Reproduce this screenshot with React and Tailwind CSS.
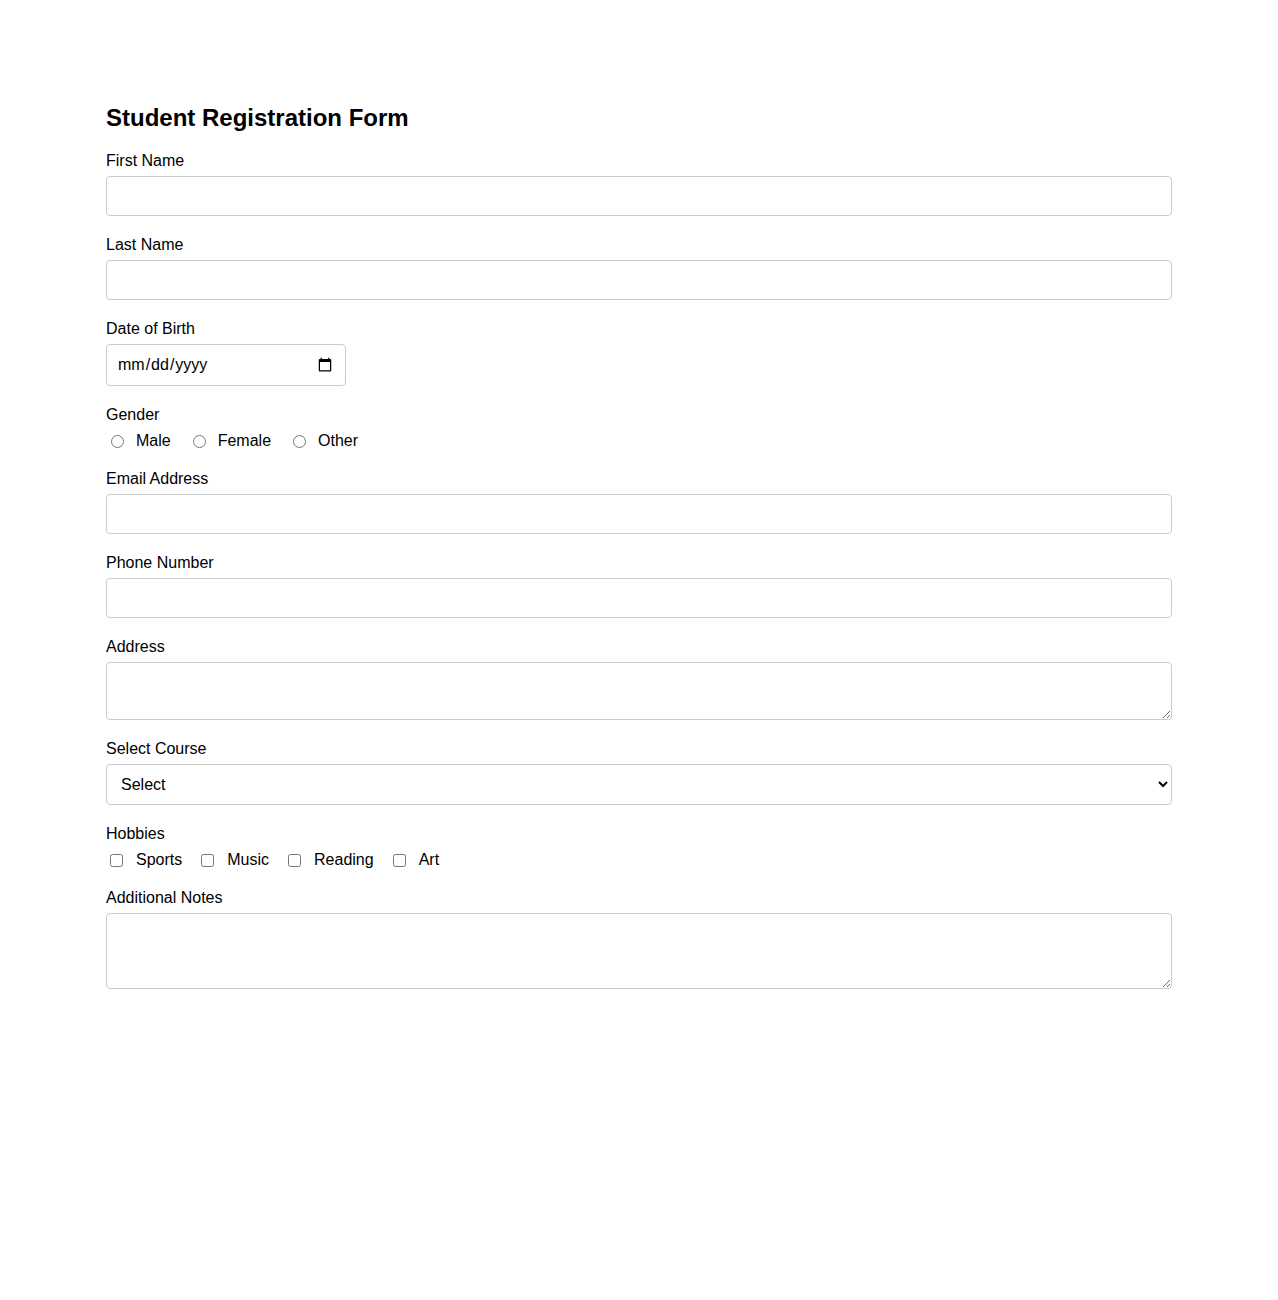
import { useState } from "react";

const inputClass =
  "block w-full px-[10px] py-[10px] text-base leading-[normal] border border-[#ccc] rounded-[4px] bg-white text-black";

function Field({ label, children }) {
  return (
    <div className="mb-5">
      <label className="block mb-[6px] leading-[normal]">{label}</label>
      {children}
    </div>
  );
}

export default function App() {
  const [form, setForm] = useState({
    firstName: "",
    lastName: "",
    dob: "",
    gender: "",
    email: "",
    phone: "",
    address: "",
    course: "",
    hobbies: [],
    notes: "",
  });

  const update = (key) => (e) => setForm({ ...form, [key]: e.target.value });

  const toggleHobby = (h) => {
    const list = form.hobbies.includes(h)
      ? form.hobbies.filter((x) => x !== h)
      : [...form.hobbies, h];
    setForm({ ...form, hobbies: list });
  };

  return (
    <div
      className="min-h-screen bg-white text-black px-[106px] pt-[104px]"
      style={{ fontFamily: '"Liberation Sans", Arial, sans-serif' }}
    >
      {/* Header */}
      <h2 className="text-2xl font-bold leading-[normal] mb-5">
        Student Registration Form
      </h2>

      <form onSubmit={(e) => e.preventDefault()}>
        <Field label="First Name">
          <input type="text" className={inputClass} value={form.firstName} onChange={update("firstName")} />
        </Field>

        <Field label="Last Name">
          <input type="text" className={inputClass} value={form.lastName} onChange={update("lastName")} />
        </Field>

        <Field label="Date of Birth">
          <input
            type="date"
            className="block w-[240px] h-[42px] px-[10px] text-base border border-[#ccc] rounded-[4px] bg-white text-black"
            value={form.dob}
            onChange={update("dob")}
          />
        </Field>

        {/* Gender */}
        <div className="mb-5">
          <label className="block mb-[6px] leading-[normal]">Gender</label>
          <div className="flex items-center pt-[2px] leading-[normal]">
            {["Male", "Female", "Other"].map((g) => (
              <label key={g} className="flex items-center mr-[17px]">
                <input
                  type="radio"
                  name="gender"
                  value={g}
                  checked={form.gender === g}
                  onChange={update("gender")}
                  className="ml-[5px] mr-[12px]"
                />
                {g}
              </label>
            ))}
          </div>
        </div>

        <Field label="Email Address">
          <input type="email" className={inputClass} value={form.email} onChange={update("email")} />
        </Field>

        <Field label="Phone Number">
          <input type="tel" className={inputClass} value={form.phone} onChange={update("phone")} />
        </Field>

        <Field label="Address">
          <textarea rows={2} className={inputClass + " resize"} value={form.address} onChange={update("address")} />
        </Field>

        <Field label="Select Course">
          <select className={inputClass} value={form.course} onChange={update("course")}>
            <option value="">Select</option>
            <option value="cs">Computer Science</option>
            <option value="math">Mathematics</option>
            <option value="physics">Physics</option>
          </select>
        </Field>

        {/* Hobbies */}
        <div className="mb-5">
          <label className="block mb-[6px] leading-[normal]">Hobbies</label>
          <div className="flex items-center pt-[2px] leading-[normal]">
            {["Sports", "Music", "Reading", "Art"].map((h) => (
              <label key={h} className="flex items-center mr-[15px]">
                <input
                  type="checkbox"
                  checked={form.hobbies.includes(h)}
                  onChange={() => toggleHobby(h)}
                  className="ml-[4px] mr-[13px]"
                />
                {h}
              </label>
            ))}
          </div>
        </div>

        <Field label="Additional Notes">
          <textarea rows={3} className={inputClass + " resize"} value={form.notes} onChange={update("notes")} />
        </Field>
      </form>
    </div>
  );
}
